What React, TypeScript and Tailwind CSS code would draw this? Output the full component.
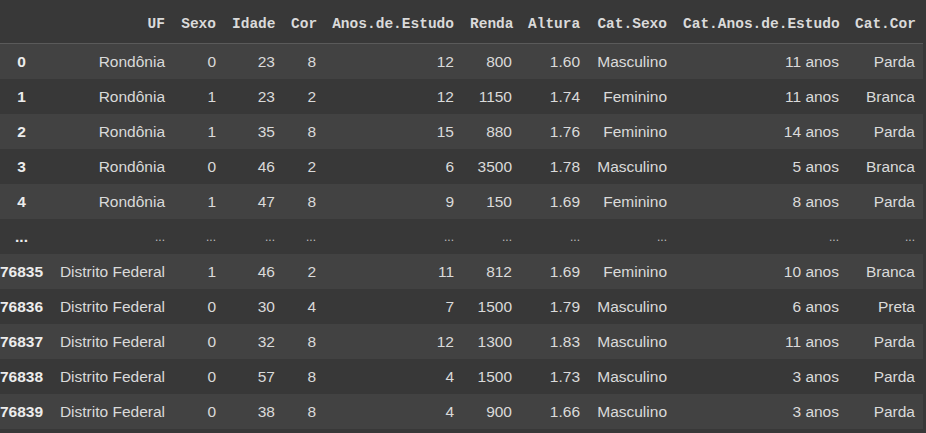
const columns = ["", "UF", "Sexo", "Idade", "Cor", "Anos.de.Estudo", "Renda", "Altura", "Cat.Sexo", "Cat.Anos.de.Estudo", "Cat.Cor"];

const rows: string[][] = [
    ["0", "Rondônia", "0", "23", "8", "12", "800", "1.60", "Masculino", "11 anos", "Parda"],
    ["1", "Rondônia", "1", "23", "2", "12", "1150", "1.74", "Feminino", "11 anos", "Branca"],
    ["2", "Rondônia", "1", "35", "8", "15", "880", "1.76", "Feminino", "14 anos", "Parda"],
    ["3", "Rondônia", "0", "46", "2", "6", "3500", "1.78", "Masculino", "5 anos", "Branca"],
    ["4", "Rondônia", "1", "47", "8", "9", "150", "1.69", "Feminino", "8 anos", "Parda"],
    ["...", "...", "...", "...", "...", "...", "...", "...", "...", "...", "..."],
    ["76835", "Distrito Federal", "1", "46", "2", "11", "812", "1.69", "Feminino", "10 anos", "Branca"],
    ["76836", "Distrito Federal", "0", "30", "4", "7", "1500", "1.79", "Masculino", "6 anos", "Preta"],
    ["76837", "Distrito Federal", "0", "32", "8", "12", "1300", "1.83", "Masculino", "11 anos", "Parda"],
    ["76838", "Distrito Federal", "0", "57", "8", "4", "1500", "1.73", "Masculino", "3 anos", "Parda"],
    ["76839", "Distrito Federal", "0", "38", "8", "4", "900", "1.66", "Masculino", "3 anos", "Parda"],
];

const grid = "grid w-[923px] grid-cols-[51px_122px_51px_59px_41px_138px_58px_68px_87px_172px_76px]";

const App = () => {
    return (
        <div className="min-h-screen bg-[#383838] text-[#dadada] overflow-hidden">
            <div className={`${grid} h-[44px] items-center pt-[7px] border-b border-[#5a5a5a] font-['Liberation_Mono',monospace] font-bold text-[14.5px]`}>
                {columns.map((c, i) => (
                    <div key={i} className="px-2 text-right whitespace-nowrap">
                        {c}
                    </div>
                ))}
            </div>
            {rows.map((r, ri) => (
                <div
                    key={ri}
                    className={`${grid} h-[35px] items-center font-['Liberation_Sans',Arial,sans-serif] text-[15.5px] ${ri % 2 === 0 ? "bg-[#424242]" : ""}`}
                >
                    {r.map((v, ci) =>
                        ci === 0 ? (
                            <div key={ci} className="pr-2 text-center font-bold whitespace-nowrap text-[#ececec]">
                                <span className="inline-block w-[43px] text-center">{v}</span>
                            </div>
                        ) : (
                            <div
                                key={ci}
                                className={`px-2 text-right whitespace-nowrap ${v === "..." ? "text-[12px] text-[#bdbdbd]" : ""}`}
                            >
                                {v}
                            </div>
                        )
                    )}
                </div>
            ))}
        </div>
    );
};

export default App;
